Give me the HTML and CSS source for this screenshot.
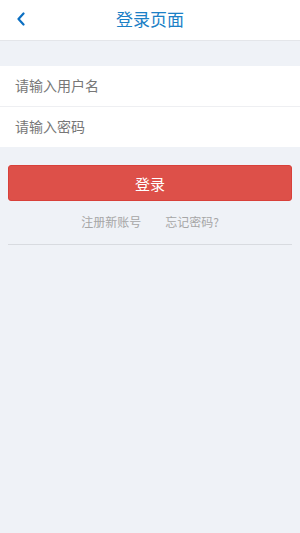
FILE: index.html
```html
<!DOCTYPE html>
<html lang="zh">

<head>
    <meta charset="UTF-8">
    <meta name="viewport" content="width=device-width, initial-scale=1.0">
    <title>登录页面</title>
    <link rel="stylesheet" href="styles.css">
</head>

<body>
    <div class="header">
        <a class="back" href="#">
            <svg width="10" height="14" viewBox="0 0 10 14">
                <path d="M7.5 1.5 L2.5 7 L7.5 12.5" fill="none" stroke="#0b6fc2" stroke-width="2.2" stroke-linecap="round" stroke-linejoin="round" />
            </svg>
        </a>
        <h1 class="title">登录页面</h1>
    </div>

    <div class="form">
        <div class="row">
            <input type="text" placeholder="请输入用户名">
        </div>
        <div class="row">
            <input type="password" placeholder="请输入密码">
        </div>
    </div>

    <div class="actions">
        <button class="login">登录</button>
        <div class="links">
            <a href="#">注册新账号</a>
            <a href="#">忘记密码?</a>
        </div>
        <div class="divider"></div>
    </div>
</body>

</html>
```

FILE: styles.css
```css
body {
    margin: 0;
    height: 533px;
    background-color: #eff2f7;
    font-family: "Noto Sans CJK SC", "Noto Sans", sans-serif;
}

.header {
    position: relative;
    height: 40px;
    background: #ffffff;
    border-bottom: 1px solid #e4e6ea;
    display: flex;
    justify-content: center;
    align-items: center;
}

.back {
    position: absolute;
    left: 16px;
    top: 12px;
    display: flex;
}

.title {
    margin: 0 0 3px;
    font-size: 17px;
    font-weight: 400;
    color: #1b80c6;
}

.form {
    margin-top: 25px;
    background: #ffffff;
}

.row {
    height: 40px;
    display: flex;
    align-items: center;
    padding: 0 15px 2px;
    box-sizing: border-box;
}

.row + .row {
    border-top: 1px solid #eeeff2;
    height: 41px;
}

.row input {
    flex: 1;
    border: none;
    outline: none;
    padding: 0;
    font-family: inherit;
    font-size: 14px;
    color: #333;
    background: transparent;
}

.row input::placeholder {
    color: #777777;
}

.actions {
    padding: 18px 8px 0;
}

.login {
    display: block;
    width: 100%;
    height: 36px;
    background: #dd5049;
    border: 1px solid #d8403a;
    border-radius: 3px;
    color: #ffffff;
    font-family: inherit;
    font-size: 15px;
}

.links {
    display: flex;
    justify-content: center;
    gap: 24px;
    margin-top: 11px;
    height: 18px;
    align-items: center;
}

.links a {
    color: #a6a6a6;
    font-size: 12px;
    text-decoration: none;
}

.divider {
    margin-top: 14px;
    height: 1px;
    background: #d8dbe0;
}
```
